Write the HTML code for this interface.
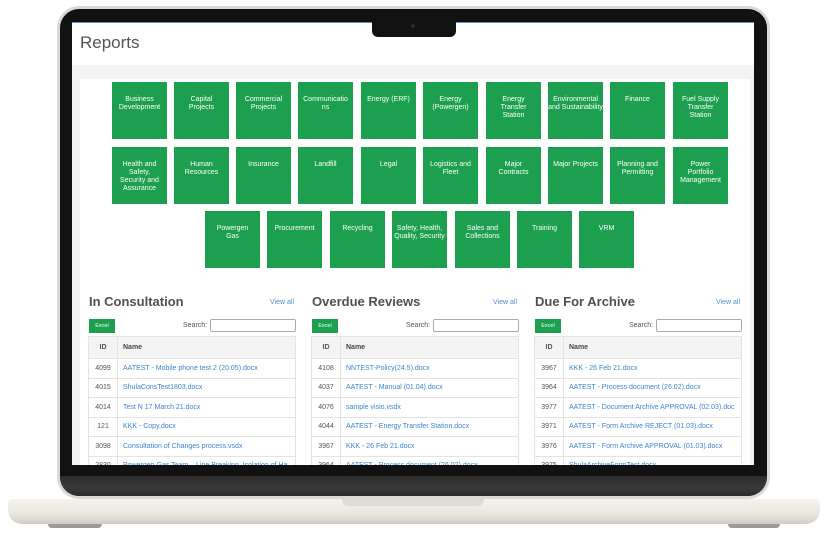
<!DOCTYPE html>
<html><head><meta charset="utf-8"><style>
*{margin:0;padding:0;box-sizing:border-box}
body{width:826px;height:542px;background:#fff;position:relative;overflow:hidden;font-family:"Liberation Sans",sans-serif}
.abs{position:absolute}
.shell{left:57px;top:6px;width:713px;height:493px;border-radius:22px;background:#d9d9d6;}
.bezel{left:60px;top:9px;width:707px;height:487px;border-radius:19px;background:#111;}
.chin{left:60px;top:476px;width:707px;height:20px;border-radius:0 0 19px 19px;background:linear-gradient(#2c2c2c,#3a3a3a 60%,#2a2a2a);}
.screen{left:72px;top:22px;width:682px;height:443px;background:#fff;overflow:hidden;border-top:1px solid #5a8fc8}
.notch{left:372px;top:21px;width:84px;height:16px;background:#111;border-radius:0 0 6px 6px}
.base{left:8px;top:499px;width:812px;height:25px;border-radius:4px 6px 14px 14px;background:linear-gradient(#f4f3ee,#e9e7df 60%,#cfcdc5)}
.foot{top:524px;height:4px;background:#9a9a98;border-radius:0 0 4px 4px}
.tile{position:absolute;width:55px;height:57px;background:#1d9f50;color:#fff;font-size:7px;line-height:8px;text-align:center;padding:14px 5px 0}
.h{position:absolute;font-size:13px;font-weight:bold;color:#505050}
.va{position:absolute;font-size:7px;color:#4a8fd6}
.xl{position:absolute;width:26px;height:14px;background:#1d9f50;color:#fff;font-size:5.5px;text-align:center;line-height:14px}
.sl{position:absolute;font-size:7px;color:#555}
.in{position:absolute;width:86px;height:13px;border:1px solid #aaa;border-radius:2px}
table{position:absolute;border-collapse:collapse;width:208px;font-size:7px}
td,th{border:1px solid #e3e3e3;height:19.5px;padding:0 5px;text-align:left;white-space:nowrap;overflow:hidden}
th{background:#f4f4f4;color:#444;height:22px}
td:first-child,th:first-child{width:29px;text-align:center;color:#555}
td a{color:#3d85d0;text-decoration:none}
</style></head><body>
<div class="abs shell"></div>
<div class="abs bezel"></div>
<div class="abs chin"></div>
<div class="abs screen">
 <div class="abs" style="left:8px;top:10px;font-size:17px;color:#555">Reports</div>
 <div class="abs" style="left:0;top:42px;width:682px;height:14px;background:#f3f3f3"></div>
 <div class="abs" style="left:0;top:56px;width:8px;height:400px;background:#f3f3f3"></div>
 <div class="abs" style="left:678px;top:56px;width:4px;height:400px;background:#f3f3f3"></div>
 <div class="tile" style="left:40px;top:59px">Business Development</div>
 <div class="tile" style="left:102px;top:59px">Capital Projects</div>
 <div class="tile" style="left:164px;top:59px">Commercial Projects</div>
 <div class="tile" style="left:226px;top:59px;padding:14px 1px 0">Communicatio ns</div>
 <div class="tile" style="left:289px;top:59px;padding:14px 1px 0">Energy (ERF)</div>
 <div class="tile" style="left:351px;top:59px">Energy (Powergen)</div>
 <div class="tile" style="left:414px;top:59px">Energy Transfer Station</div>
 <div class="tile" style="left:476px;top:59px;padding:14px 0 0">Environmental and Sustainability</div>
 <div class="tile" style="left:538px;top:59px">Finance</div>
 <div class="tile" style="left:601px;top:59px">Fuel Supply Transfer Station</div>
 <div class="tile" style="left:40px;top:124px">Health and Safety, Security and Assurance</div>
 <div class="tile" style="left:102px;top:124px">Human Resources</div>
 <div class="tile" style="left:164px;top:124px">Insurance</div>
 <div class="tile" style="left:226px;top:124px">Landfill</div>
 <div class="tile" style="left:289px;top:124px">Legal</div>
 <div class="tile" style="left:351px;top:124px;padding:14px 1px 0">Logistics and Fleet</div>
 <div class="tile" style="left:414px;top:124px">Major Contracts</div>
 <div class="tile" style="left:476px;top:124px;padding:14px 1px 0">Major Projects</div>
 <div class="tile" style="left:538px;top:124px;padding:14px 2px 0">Planning and Permitting</div>
 <div class="tile" style="left:601px;top:124px">Power Portfolio Management</div>
 <div class="tile" style="left:133px;top:188px">Powergen Gas</div>
 <div class="tile" style="left:195px;top:188px">Procurement</div>
 <div class="tile" style="left:258px;top:188px">Recycling</div>
 <div class="tile" style="left:320px;top:188px;padding:14px 2px 0">Safety, Health, Quality, Security</div>
 <div class="tile" style="left:383px;top:188px">Sales and Collections</div>
 <div class="tile" style="left:445px;top:188px">Training</div>
 <div class="tile" style="left:507px;top:188px">VRM</div>

 <div class="h" style="left:17px;top:271px">In Consultation</div>
 <div class="va" style="left:198px;top:276px">View all</div>
 <div class="xl" style="left:17px;top:296px">Excel</div>
 <div class="sl" style="left:111px;top:299px">Search:</div>
 <div class="in" style="left:138px;top:296px"></div>
 <table style="left:16px;top:313px"><tr><th>ID</th><th>Name</th></tr>
 <tr><td>4099</td><td><a>AATEST - Mobile phone test 2 (20.05).docx</a></td></tr>
 <tr><td>4015</td><td><a>ShulaConsTest1803.docx</a></td></tr>
 <tr><td>4014</td><td><a>Test N 17 March 21.docx</a></td></tr>
 <tr><td>121</td><td><a>KKK - Copy.docx</a></td></tr>
 <tr><td>3098</td><td><a>Consultation of Changes process.vsdx</a></td></tr>
 <tr><td>2830</td><td><a>Powergen Gas Team – Line Breaking, Isolation of Ha</a></td></tr></table>

 <div class="h" style="left:240px;top:271px">Overdue Reviews</div>
 <div class="va" style="left:421px;top:276px">View all</div>
 <div class="xl" style="left:240px;top:296px">Excel</div>
 <div class="sl" style="left:334px;top:299px">Search:</div>
 <div class="in" style="left:361px;top:296px"></div>
 <table style="left:239px;top:313px"><tr><th>ID</th><th>Name</th></tr>
 <tr><td>4108</td><td><a>NNTEST-Policy(24.5).docx</a></td></tr>
 <tr><td>4037</td><td><a>AATEST - Manual (01.04).docx</a></td></tr>
 <tr><td>4076</td><td><a>sample visio.vsdx</a></td></tr>
 <tr><td>4044</td><td><a>AATEST - Energy Transfer Station.docx</a></td></tr>
 <tr><td>3967</td><td><a>KKK - 26 Feb 21.docx</a></td></tr>
 <tr><td>3964</td><td><a>AATEST - Process document (26.02).docx</a></td></tr></table>

 <div class="h" style="left:463px;top:271px">Due For Archive</div>
 <div class="va" style="left:644px;top:276px">View all</div>
 <div class="xl" style="left:463px;top:296px">Excel</div>
 <div class="sl" style="left:557px;top:299px">Search:</div>
 <div class="in" style="left:584px;top:296px"></div>
 <table style="left:462px;top:313px"><tr><th>ID</th><th>Name</th></tr>
 <tr><td>3967</td><td><a>KKK - 26 Feb 21.docx</a></td></tr>
 <tr><td>3964</td><td><a>AATEST - Process document (26.02).docx</a></td></tr>
 <tr><td>3977</td><td><a>AATEST - Document Archive APPROVAL (02.03).doc</a></td></tr>
 <tr><td>3971</td><td><a>AATEST - Form Archive REJECT (01.03).docx</a></td></tr>
 <tr><td>3976</td><td><a>AATEST - Form Archive APPROVAL (01.03).docx</a></td></tr>
 <tr><td>3975</td><td><a>ShulaArchiveFormTest.docx</a></td></tr></table>
</div>
<div class="abs notch"></div>
<div class="abs" style="left:411px;top:24px;width:4px;height:4px;border-radius:50%;background:#2a2a2a"></div>
<div class="abs base"></div>
<div class="abs" style="left:342px;top:499px;width:142px;height:7px;background:#dedcd4;border-radius:0 0 6px 6px"></div>
<div class="abs foot" style="left:48px;width:54px"></div>
<div class="abs foot" style="left:728px;width:52px"></div>
</body></html>
